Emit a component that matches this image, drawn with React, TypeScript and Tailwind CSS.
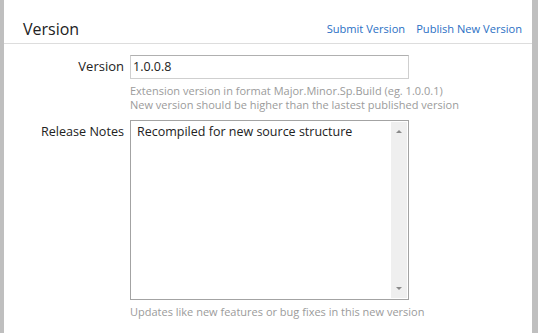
import React, { useState } from 'react';

export default function App() {
  const [version, setVersion] = useState('1.0.0.8');
  const [notes, setNotes] = useState('Recompiled for new source structure');

  return (
    <div className="flex h-[333px] w-[538px] overflow-hidden bg-white font-['Open_Sans',sans-serif] text-[#222]">
      <div className="w-[4px] shrink-0 bg-[#bfbfbf]" />
      <div className="flex min-w-0 flex-1 flex-col">
        <div className="flex h-[44px] shrink-0 items-end justify-between border-b border-[#dddddd] pb-[3px] pl-[19px] pr-[10px]">
          <h2 className="text-[16px] leading-[22px] text-[#222]">Version</h2>
          <div className="flex gap-[11px] pb-[3px] text-[11.1px] leading-[16px] text-[#2a6fc4]">
            <a href="#" className="hover:underline">Submit Version</a>
            <a href="#" className="hover:underline">Publish New Version</a>
          </div>
        </div>

        <div className="grid grid-cols-[120px_279px] gap-x-[6px] pt-[9px]">
          <label className="pt-[5px] text-right text-[13px] leading-[16px]">Version</label>
          <div>
            <input
              value={version}
              onChange={(e) => setVersion(e.target.value)}
              className="h-[24px] w-full border border-[#cfcfcf] border-t-[#b0b0b0] px-[2px] text-[12.5px] outline-none"
            />
            <div className="mt-[5px] whitespace-nowrap text-[11px] leading-[14px] text-[#9b9b9b]">
              <p>Extension version in format Major.Minor.Sp.Build (eg. 1.0.0.1)</p>
              <p>New version should be higher than the lastest published version</p>
            </div>
          </div>

          <label className="mt-[8px] pt-[4px] text-right text-[12.6px] leading-[16px]">Release Notes</label>
          <div className="mt-[8px]">
            <div className="flex h-[180px] border border-[#a3a3a3]">
              <textarea
                value={notes}
                onChange={(e) => setNotes(e.target.value)}
                className="min-w-0 flex-1 resize-none px-[6px] pt-[3px] text-[12.5px] leading-[16px] outline-none"
              />
              <div className="my-[1px] mr-[1px] flex w-[16px] flex-col items-center justify-between bg-[#efefef] py-[8px]">
                <div className="h-0 w-0 border-x-[3px] border-b-[3px] border-x-transparent border-b-[#8a8a8a]" />
                <div className="h-0 w-0 border-x-[3px] border-t-[3px] border-x-transparent border-t-[#8a8a8a]" />
              </div>
            </div>
            <p className="mt-[5px] whitespace-nowrap text-[11px] leading-[13px] text-[#9b9b9b]">
              Updates like new features or bug fixes in this new version
            </p>
          </div>
        </div>
      </div>
      <div className="w-[6px] shrink-0 bg-[#bfbfbf]" />
    </div>
  );
}
